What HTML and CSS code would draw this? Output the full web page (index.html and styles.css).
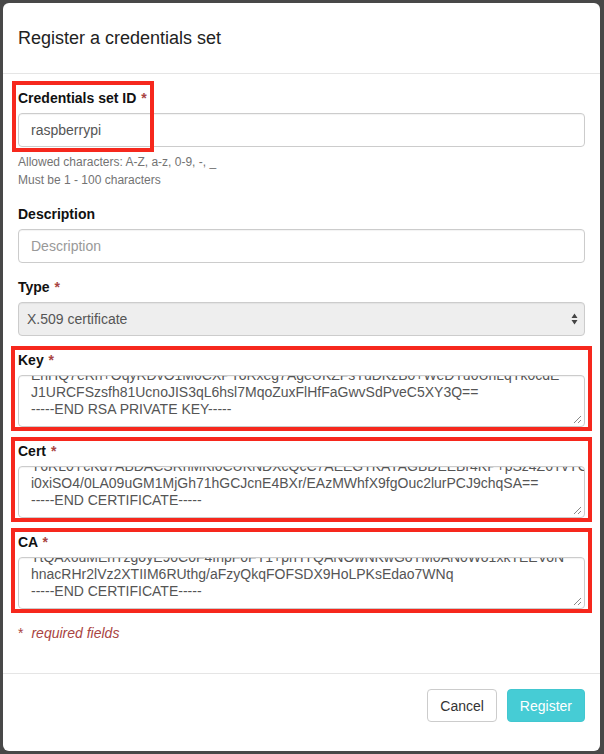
FILE: index.html
```html
<!DOCTYPE html>
<html>
<head>
<meta charset="utf-8">
<link rel="stylesheet" href="styles.css">
</head>
<body>
<div class="modal">
  <div class="modal-header">
    <h4 class="modal-title">Register a credentials set</h4>
  </div>
  <div class="modal-body">
    <div class="form-group">
      <span class="annot annot-id"></span>
      <label class="control-label">Credentials set ID <span class="req">*</span></label>
      <div class="form-control">raspberrypi</div>
      <p class="help-block">Allowed characters: A-Z, a-z, 0-9, -, _<br>Must be 1 - 100 characters</p>
    </div>
    <div class="form-group">
      <label class="control-label">Description</label>
      <div class="form-control placeholder">Description</div>
    </div>
    <div class="form-group">
      <label class="control-label">Type <span class="req">*</span></label>
      <div class="form-control select">
        <span>X.509 certificate</span>
        <svg class="arrows" width="7" height="12" viewBox="0 0 7 12"><path d="M3.5 0.5 L6.5 5 L0.5 5 Z M0.5 7 L6.5 7 L3.5 11.5 Z" fill="#444"/></svg>
      </div>
    </div>
    <div class="form-group boxed">
      <label class="control-label">Key <span class="req">*</span></label>
      <div class="form-control textarea">
        <div class="ta-lines">
          <div>EnHQ7eRh+OqyRDvO1M0CXPYoRxeg7AgeUKZFsYuDKzB0+WeDYu0UhLqTk0cdE</div>
          <div>J1URCFSzsfh81UcnoJIS3qL6hsl7MqoZuxFlHfFaGwvSdPveC5XY3Q==</div>
          <div>-----END RSA PRIVATE KEY-----</div>
        </div>
        <svg class="grip" width="9" height="9" viewBox="0 0 9 9"><path d="M1 8 L8 1 M5 8 L8 5" stroke="#888" stroke-width="1" fill="none"/></svg>
      </div>
    </div>
    <div class="form-group boxed">
      <label class="control-label">Cert <span class="req">*</span></label>
      <div class="form-control textarea">
        <div class="ta-lines">
          <div>Y6RL0YcKd7ABDACSRhMKi0CUKNDXcQcC7AEEGTKAYAGBDEEBr4KP+pSz4Z6TvYG</div>
          <div>i0xiSO4/0LA09uGM1MjGh71hGCJcnE4BXr/EAzMWhfX9fgOuc2lurPCJ9chqSA==</div>
          <div>-----END CERTIFICATE-----</div>
        </div>
        <svg class="grip" width="9" height="9" viewBox="0 0 9 9"><path d="M1 8 L8 1 M5 8 L8 5" stroke="#888" stroke-width="1" fill="none"/></svg>
      </div>
    </div>
    <div class="form-group boxed">
      <label class="control-label">CA <span class="req">*</span></label>
      <div class="form-control textarea">
        <div class="ta-lines">
          <div>TtQAx6uMEnTzgoyE90C0F4fhpF0FT1+prHYQANOwNKwGoTM0AN0Wo1xkTEEVoN</div>
          <div>hnacRHr2lVz2XTIIM6RUthg/aFzyQkqFOFSDX9HoLPKsEdao7WNq</div>
          <div>-----END CERTIFICATE-----</div>
        </div>
        <svg class="grip" width="9" height="9" viewBox="0 0 9 9"><path d="M1 8 L8 1 M5 8 L8 5" stroke="#888" stroke-width="1" fill="none"/></svg>
      </div>
    </div>
    <p class="required-note"><span class="star">*</span><em>required fields</em></p>
  </div>
  <div class="modal-footer">
    <button class="btn btn-default">Cancel</button>
    <button class="btn btn-info">Register</button>
  </div>
</div>
</body>
</html>
```
FILE: styles.css
```css
* { box-sizing: border-box; }
html, body {
  margin: 0;
  padding: 0;
}
body {
  width: 604px;
  height: 754px;
  background: #484848;
  font-family: "Liberation Sans", Arial, sans-serif;
  font-size: 14px;
  line-height: 20px;
  color: #333;
  overflow: hidden;
}
.modal {
  margin: 3px 0 0 3px;
  width: 597px;
  height: 748px;
  background: #fff;
  border-radius: 6px;
  display: flex;
  flex-direction: column;
  overflow: hidden;
}
.modal-header {
  height: 71px;
  padding: 0 15px;
  border-bottom: 1px solid #e5e5e5;
  display: flex;
  align-items: center;
  flex: none;
}
.modal-title {
  margin: 0;
  font-size: 18px;
  font-weight: normal;
  line-height: 24px;
  color: #222;
}
.modal-body {
  flex: 1;
  padding: 14px 15px 0 15px;
}
.form-group {
  position: relative;
  margin-bottom: 14px;
}
.form-group:first-child { margin-bottom: 15px; }
.control-label {
  display: block;
  font-weight: bold;
  color: #111;
  margin-bottom: 5px;
  line-height: 20px;
}
.req {
  color: #a94442;
  margin-left: 1px;
}
.form-control {
  height: 34px;
  border: 1px solid #ccc;
  border-radius: 4px;
  padding: 0 12px;
  display: flex;
  align-items: center;
  color: #555;
  background: #fff;
  box-shadow: inset 0 1px 1px rgba(0,0,0,0.05);
}
.placeholder { color: #999; }
.select {
  background: #eee;
  padding-left: 8px;
  justify-content: space-between;
  padding-right: 6px;
}
.arrows { display: block; }
.help-block {
  margin: 6px 0 0 0;
  font-size: 12px;
  line-height: 18px;
  color: #737373;
}
.textarea {
  height: 52px;
  display: block;
  position: relative;
  overflow: hidden;
  padding: 0 12px;
}
.ta-lines {
  margin-top: -9px;
  line-height: 17px;
  white-space: nowrap;
}
.grip {
  position: absolute;
  right: 2px;
  bottom: 2px;
}
.annot {
  position: absolute;
  border: 4px solid #f6281d;
  pointer-events: none;
}
.annot-id {
  left: -6px;
  top: -7px;
  width: 142px;
  height: 71px;
}
.boxed::before {
  content: "";
  position: absolute;
  left: -7px;
  right: -7px;
  top: -4px;
  bottom: -4px;
  border: 4px solid #f6281d;
  pointer-events: none;
}
.required-note {
  margin: 0;
  color: #a94442;
  line-height: 20px;
}
.required-note .star { margin-right: 8px; }
.modal-footer {
  flex: none;
  height: 78px;
  border-top: 1px solid #e5e5e5;
  padding: 15px 15px 0 15px;
  display: flex;
  justify-content: flex-end;
  align-items: flex-start;
  gap: 10px;
}
.btn {
  font-family: "Liberation Sans", Arial, sans-serif;
  font-size: 14px;
  line-height: 20px;
  height: 33px;
  padding: 0 12px;
  border-radius: 4px;
  border: 1px solid #ccc;
  background: #fff;
  color: #333;
}
.btn-info {
  background: #46ccd5;
  border-color: #42c7d0;
  color: #fff;
}
```
